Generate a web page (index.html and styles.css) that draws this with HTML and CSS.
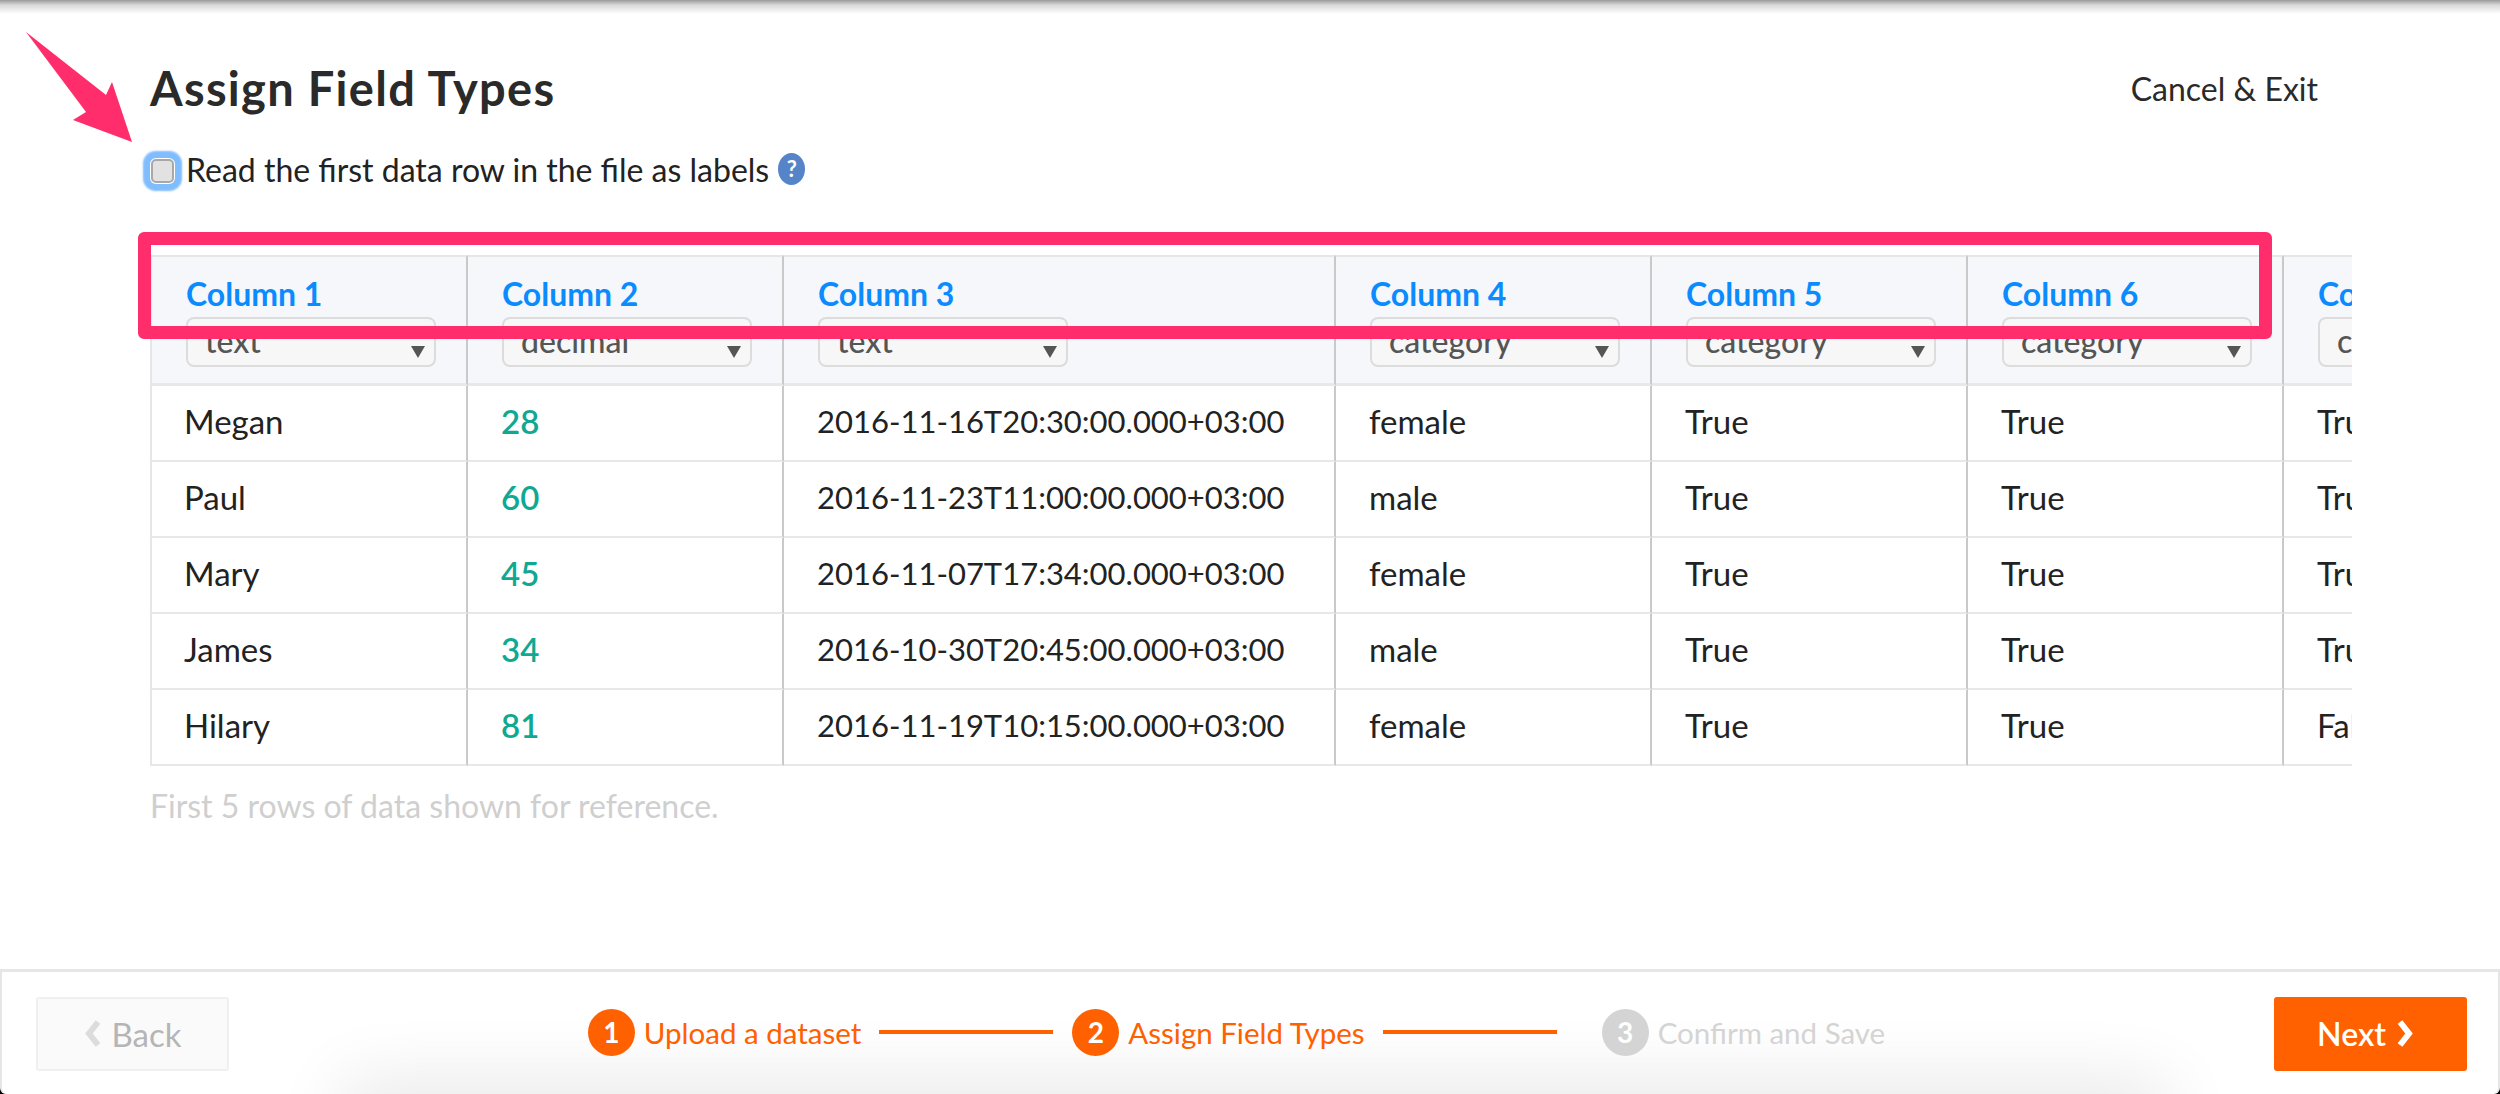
FILE: index.html
```html
<!DOCTYPE html>
<html lang="en">
<head>
  <meta charset="UTF-8">
  <title>Assign Field Types</title>
  <link rel="stylesheet" href="styles.css">
</head>
<body>
  <main class="content">
    <header class="title-row">
      <h1>Assign Field Types</h1>
      <a class="cancel">Cancel &amp; Exit</a>
    </header>

    <label class="first-row">
      <input type="checkbox">
      <span>Read the first data row in the file as labels</span>
      <span class="help">?</span>
    </label>

    <div class="table-wrap">
      <table>
        <colgroup>
          <col class="c-first"><col class="c-num"><col class="c-date">
          <col class="c-num"><col class="c-num"><col class="c-num"><col class="c-num">
        </colgroup>
        <thead>
          <tr>
            <th><div class="col-name">Column 1</div><div class="type-select">text</div></th>
            <th><div class="col-name">Column 2</div><div class="type-select">decimal</div></th>
            <th><div class="col-name">Column 3</div><div class="type-select">text</div></th>
            <th><div class="col-name">Column 4</div><div class="type-select">category</div></th>
            <th><div class="col-name">Column 5</div><div class="type-select">category</div></th>
            <th><div class="col-name">Column 6</div><div class="type-select">category</div></th>
            <th><div class="col-name">Column 7</div><div class="type-select">category</div></th>
          </tr>
        </thead>
        <tbody>
          <tr><td>Megan</td><td class="num">28</td><td class="date">2016-11-16T20:30:00.000+03:00</td><td>female</td><td>True</td><td>True</td><td>True</td></tr>
          <tr><td>Paul</td><td class="num">60</td><td class="date">2016-11-23T11:00:00.000+03:00</td><td>male</td><td>True</td><td>True</td><td>True</td></tr>
          <tr><td>Mary</td><td class="num">45</td><td class="date">2016-11-07T17:34:00.000+03:00</td><td>female</td><td>True</td><td>True</td><td>True</td></tr>
          <tr><td>James</td><td class="num">34</td><td class="date">2016-10-30T20:45:00.000+03:00</td><td>male</td><td>True</td><td>True</td><td>True</td></tr>
          <tr><td>Hilary</td><td class="num">81</td><td class="date">2016-11-19T10:15:00.000+03:00</td><td>female</td><td>True</td><td>True</td><td>False</td></tr>
        </tbody>
      </table>
    </div>

    <p class="caption">First 5 rows of data shown for reference.</p>
  </main>

  <footer class="wizard">
    <button class="btn-back">
      <svg width="18" height="27" viewBox="0 0 18 27"><path d="M14 2 L5 13.5 L14 25" fill="none" stroke="#dcdcdc" stroke-width="6"/></svg>
      Back
    </button>
    <ol class="steps">
      <li class="step"><span class="dot">1</span>Upload a dataset</li>
      <li class="line"></li>
      <li class="step"><span class="dot">2</span>Assign Field Types</li>
      <li class="line last"></li>
      <li class="step off"><span class="dot">3</span>Confirm and Save</li>
    </ol>
    <button class="btn-next">
      Next
      <svg width="18" height="27" viewBox="0 0 18 27"><path d="M4 2 L13 13.5 L4 25" fill="none" stroke="#fff" stroke-width="6"/></svg>
    </button>
  </footer>

  <!-- annotations on top of the screenshot -->
  <svg class="note-arrow" width="140" height="150" viewBox="0 0 140 150">
    <polygon points="26,32 106,95 112,82 132,142 73,120 86,112" fill="#ff2d6b"/>
  </svg>
  <div class="note-box"></div>
</body>
</html>
```

FILE: styles.css
```css
* {
  box-sizing: border-box;
}
html, body {
  margin: 0;
  height: 100%;
}
body {
  position: relative;
  display: flex;
  flex-direction: column;
  height: 1094px;
  overflow: hidden;
  background: #000;
  font-family: Lato, "Open Sans", sans-serif;
  font-size: 32px;
  color: #222;
}
.content {
  flex: 1;
  padding: 63px 0 0 150px;
  background: #fff linear-gradient(#9a9a9a 0, #d8d8d8 5px, #fff 14px) no-repeat top / 100% 14px;
}
.title-row {
  display: flex;
  justify-content: space-between;
  align-items: center;
  width: 2202px;
  padding-right: 34px;
}
h1 {
  margin: 0;
  font-size: 47px;
  line-height: 50px;
  font-weight: 700;
  letter-spacing: 1.3px;
  color: #2a2a2a;
}
.cancel {
  color: #2a2a2a;
}
.first-row {
  display: flex;
  align-items: center;
  height: 36px;
  margin-top: 38px;
}
.first-row input {
  appearance: none;
  width: 23px;
  height: 24px;
  margin: 3px 12px 0 1px;
  background: #e2e2e2;
  border: 2px solid #a8a8a8;
  border-radius: 5px;
  box-shadow: 0 0 0 1px #fff, 0 0 2px 8px #80bdff;
}
.help {
  width: 27px;
  height: 32px;
  margin-left: 9px;
  border-radius: 50%;
  background: #5585c8;
  color: #fff;
  font-size: 22px;
  font-weight: 700;
  line-height: 32px;
  text-align: center;
}
.table-wrap {
  width: 2202px;
  margin-top: 68px;
  overflow: hidden;
}
table {
  width: 2450px;
  table-layout: fixed;
  border-collapse: separate;
  border-spacing: 0;
}
.c-first {
  width: 318px;
}
.c-num {
  width: 316px;
}
.c-date {
  width: 552px;
}
th {
  height: 131px;
  padding: 20px 0 0 34px;
  vertical-align: top;
  text-align: left;
  background: #f6f7fb;
  border-top: 2px solid #e6e6e6;
  border-bottom: 3px solid #e8e8e8;
  border-right: 2px solid #c9c9c9;
  font-weight: 400;
}
th:first-child, td:first-child {
  border-left: 2px solid #e6e6e6;
}
td:first-child {
  padding-left: 32px;
}
.col-name {
  height: 34px;
  line-height: 34px;
  font-weight: 700;
  color: #0a8cff;
}
.type-select {
  position: relative;
  width: 250px;
  height: 50px;
  margin-top: 6px;
  padding-left: 17px;
  line-height: 44px;
  background: #f7f7f7;
  border: 2px solid #dcdcdc;
  border-radius: 8px;
  color: #555;
  font-weight: 500;
  overflow: hidden;
}
.type-select::after {
  content: "";
  position: absolute;
  top: 27px;
  right: 9px;
  border-left: 7px solid transparent;
  border-right: 7px solid transparent;
  border-top: 12px solid #555;
}
td {
  height: 76px;
  padding: 0 0 5px 33px;
  border-bottom: 2px solid #e8e8e8;
  border-right: 2px solid #c9c9c9;
  color: #222;
  font-size: 33px;
  white-space: nowrap;
}
td.date {
  font-size: 31px;
}
td.num {
  color: #0fa893;
  font-weight: 600;
}
.caption {
  margin: 23px 0 0;
  line-height: 34px;
  color: #cfcfcf;
}
.wizard {
  position: relative;
  display: flex;
  justify-content: space-between;
  align-items: center;
  height: 125px;
  padding: 1px 31px 0 34px;
  background: #fff;
  border: 2px solid #e6e6e6;
  border-top-width: 3px;
  border-bottom: 0;
  border-radius: 0 0 6px 6px;
  overflow: hidden;
}
/* soft shadow of the window below, cut off by the footer */
.wizard::before {
  content: "";
  position: absolute;
  left: 360px;
  right: 350px;
  top: 128px;
  height: 40px;
  box-shadow: 0 0 70px 20px rgba(0, 0, 0, 0.09);
}
.wizard > * {
  position: relative;
}
button {
  display: flex;
  justify-content: center;
  align-items: center;
  gap: 10px;
  width: 193px;
  height: 74px;
  border-radius: 3px;
  font: inherit;
}
.btn-back {
  background: #fafafa;
  border: 2px solid #f0f0f0;
  color: #b5b5b5;
  font-size: 33px;
}
.btn-next {
  padding: 0 10px 0 0;
  background: #ff6000;
  border: 0;
  color: #fff;
  font-weight: 600;
}
.steps {
  display: flex;
  align-items: center;
  margin: 0 30px 3px 0;
  padding: 0;
  list-style: none;
}
.step {
  display: flex;
  align-items: center;
  color: #ff6000;
  font-size: 29.5px;
}
.dot {
  width: 47px;
  height: 47px;
  margin-right: 9px;
  border-radius: 50%;
  background: #ff6000;
  color: #fff;
  font-size: 28px;
  font-weight: 700;
  line-height: 47px;
  text-align: center;
}
.step.off {
  color: #d4d4d4;
}
.step.off .dot {
  background: #d4d4d4;
}
.line {
  width: 174px;
  height: 4px;
  margin: 0 19px 0 18px;
  background: #ff6000;
}
.line.last {
  margin-right: 45px;
}
.note-arrow {
  position: absolute;
  left: 0;
  top: 0;
}
.note-box {
  position: absolute;
  left: 138px;
  top: 232px;
  width: 2134px;
  height: 107px;
  border: 13px solid #ff2d6b;
  border-radius: 6px;
}
```
